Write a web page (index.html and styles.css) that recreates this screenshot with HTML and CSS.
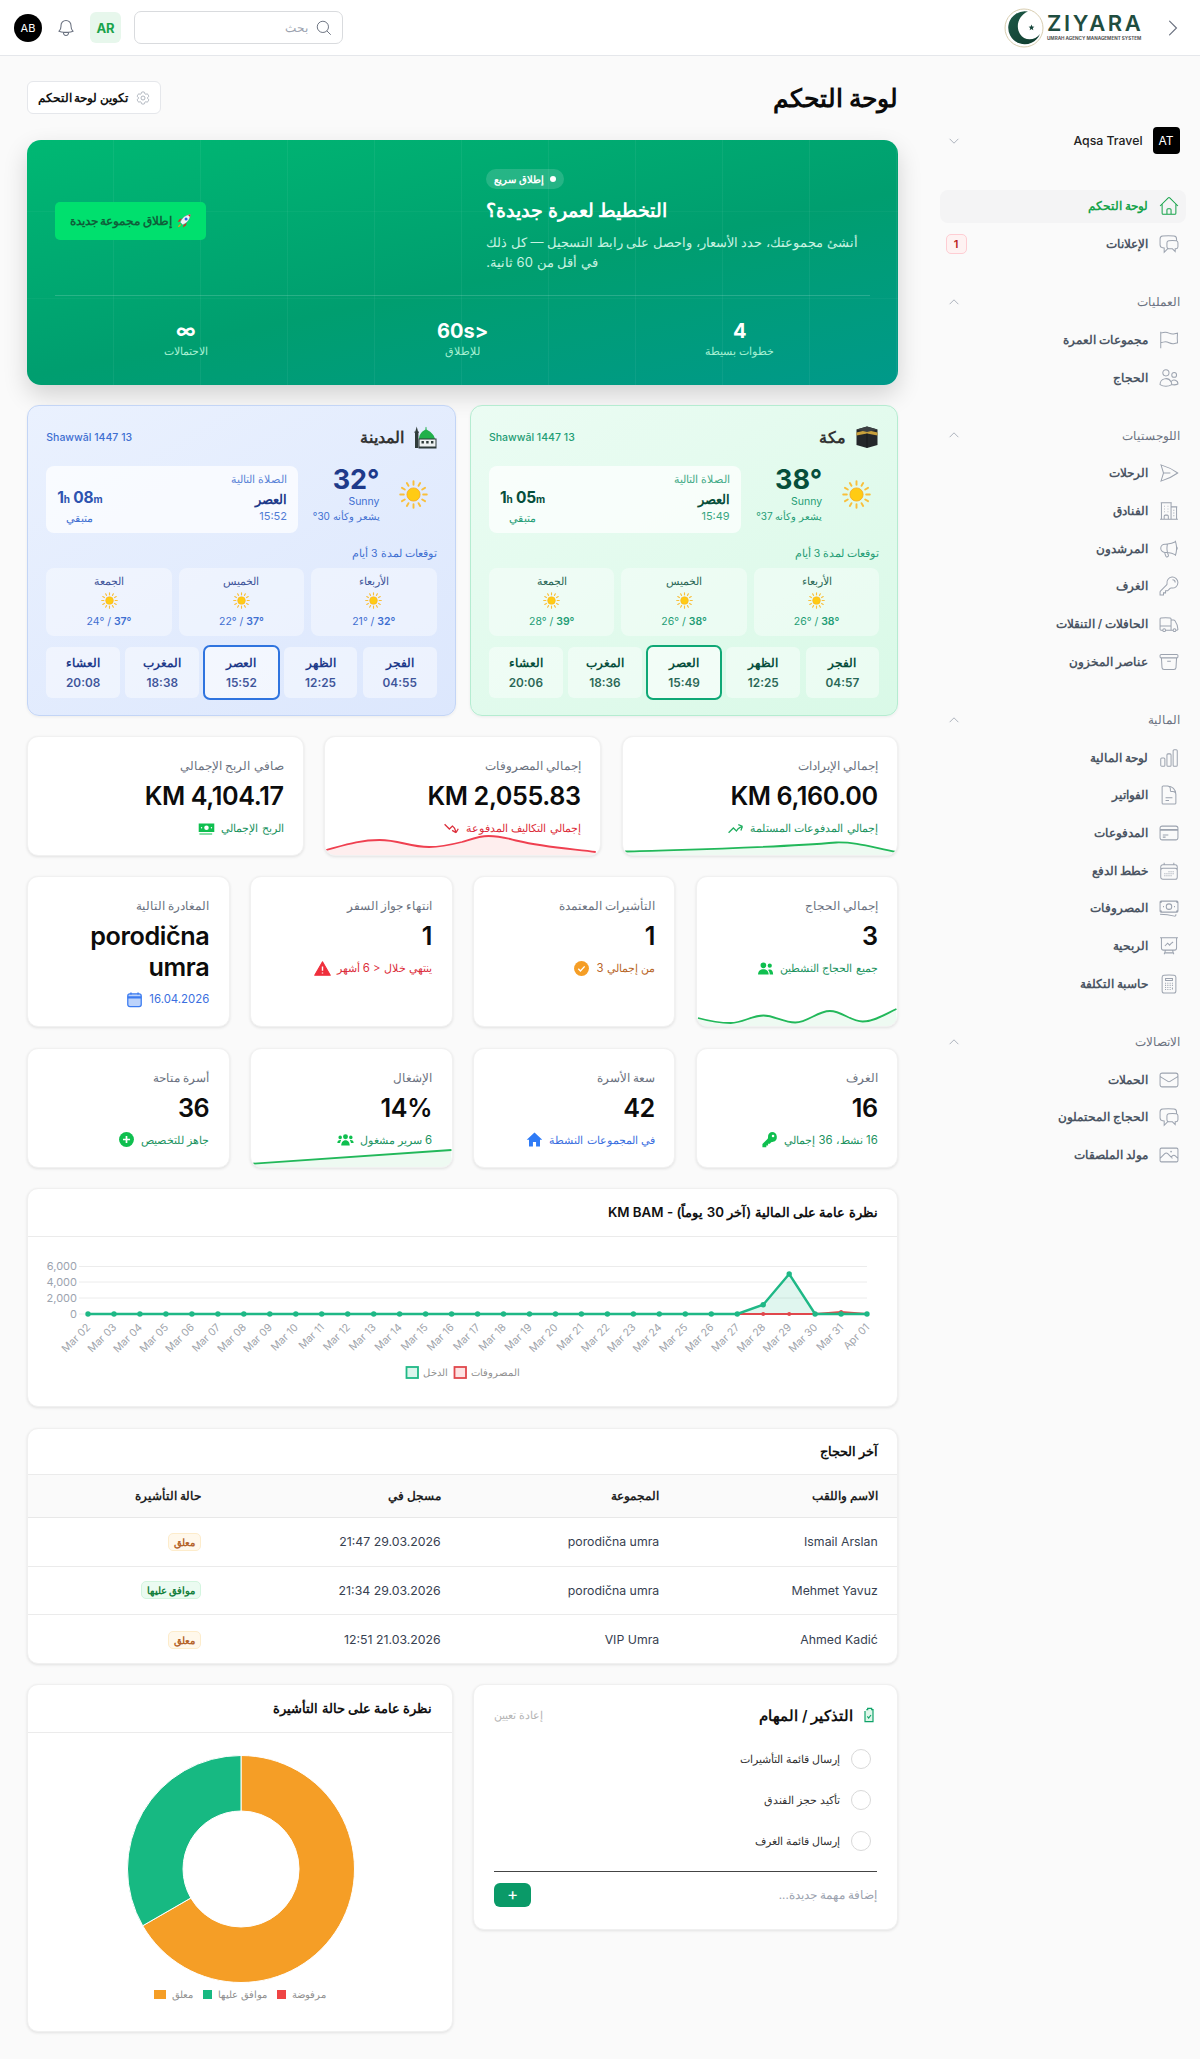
FILE: index.html
```html
<!DOCTYPE html>
<html lang="ar" dir="rtl">
<head>
<meta charset="utf-8">
<title>لوحة التحكم</title>
<link rel="stylesheet" href="styles.css">
</head>
<body>
<svg class="defs" aria-hidden="true">
<symbol id="i-home" viewBox="0 0 24 24"><path d="m2.25 12 8.954-8.955c.44-.439 1.152-.439 1.591 0L21.75 12M4.5 9.75v10.125c0 .621.504 1.125 1.125 1.125H9.75v-4.875c0-.621.504-1.125 1.125-1.125h2.25c.621 0 1.125.504 1.125 1.125V21h4.125c.621 0 1.125-.504 1.125-1.125V9.75M8.25 21h8.25"/></symbol>
<symbol id="i-chat" viewBox="0 0 24 24"><path d="M20.25 8.511c.884.284 1.5 1.128 1.5 2.097v4.286c0 1.136-.847 2.1-1.98 2.193-.34.027-.68.052-1.02.072v3.091l-3-3c-1.354 0-2.694-.055-4.02-.163a2.115 2.115 0 0 1-.825-.242m9.345-8.334a2.126 2.126 0 0 0-.476-.095 48.64 48.64 0 0 0-8.048 0c-1.131.094-1.976 1.057-1.976 2.192v4.286c0 .837.46 1.58 1.155 1.951m9.345-8.334V6.637c0-1.621-1.152-3.026-2.76-3.235A48.455 48.455 0 0 0 11.25 3c-2.115 0-4.198.137-6.24.402-1.608.209-2.76 1.614-2.76 3.235v6.226c0 1.621 1.152 3.026 2.76 3.235.577.075 1.157.14 1.74.194V21l4.155-4.155"/></symbol>
<symbol id="i-flag" viewBox="0 0 24 24"><path d="M3 3v1.5M3 21v-6m0 0 2.77-.693a9 9 0 0 1 6.208.682l.108.054a9 9 0 0 0 6.086.71l3.114-.732a48.524 48.524 0 0 1-.005-10.499l-3.11.732a9 9 0 0 1-6.085-.711l-.108-.054a9 9 0 0 0-6.208-.682L3 4.5M3 15V4.5"/></symbol>
<symbol id="i-users" viewBox="0 0 24 24"><path d="M15 19.128a9.38 9.38 0 0 0 2.625.372 9.337 9.337 0 0 0 4.121-.952 4.125 4.125 0 0 0-7.533-2.493M15 19.128v-.003c0-1.113-.285-2.16-.786-3.07M15 19.128v.106A12.318 12.318 0 0 1 8.624 21c-2.331 0-4.512-.645-6.374-1.766l-.001-.109a6.375 6.375 0 0 1 11.964-3.07M12 6.375a3.375 3.375 0 1 1-6.75 0 3.375 3.375 0 0 1 6.75 0Zm8.25 2.25a2.625 2.625 0 1 1-5.25 0 2.625 2.625 0 0 1 5.25 0Z"/></symbol>
<symbol id="i-plane" viewBox="0 0 24 24"><path d="M6 12 3.269 3.125A59.769 59.769 0 0 1 21.485 12 59.768 59.768 0 0 1 3.27 20.875L5.999 12Zm0 0h7.5"/></symbol>
<symbol id="i-building" viewBox="0 0 24 24"><path d="M2.25 21h19.5m-18-18v18m10.5-18v18m6-13.5V21M6.75 6.75h.75m-.75 3h.75m-.75 3h.75m3-6h.75m-.75 3h.75m-.75 3h.75M6.75 21v-3.375c0-.621.504-1.125 1.125-1.125h2.25c.621 0 1.125.504 1.125 1.125V21M3 3h12m-.75 4.5H21m-3.75 3.75h.008v.008h-.008v-.008Zm0 3h.008v.008h-.008v-.008Zm0 3h.008v.008h-.008v-.008Z"/></symbol>
<symbol id="i-mega" viewBox="0 0 24 24"><path d="M10.34 15.84c-.688-.06-1.386-.09-2.09-.09H7.5a4.5 4.5 0 1 1 0-9h.75c.704 0 1.402-.03 2.09-.09m0 9.18c.253.962.584 1.892.985 2.783.247.55.06 1.21-.463 1.511l-.657.38c-.551.318-1.26.117-1.527-.461a20.845 20.845 0 0 1-1.44-4.282m3.102.069a18.03 18.03 0 0 1-.59-4.59c0-1.586.205-3.124.59-4.59m0 9.18a23.848 23.848 0 0 1 8.835 2.535M10.34 6.66a23.847 23.847 0 0 0 8.835-2.535m0 0A23.74 23.74 0 0 0 18.795 3m.38 1.125a23.91 23.91 0 0 1 1.014 5.395m-1.014 8.855c-.118.38-.245.754-.38 1.125m.38-1.125a23.91 23.91 0 0 0 1.014-5.395m0-3.46c.495.413.811 1.035.811 1.73 0 .695-.316 1.317-.811 1.73m0-3.46a24.347 24.347 0 0 1 0 3.46"/></symbol>
<symbol id="i-key" viewBox="0 0 24 24"><path d="M15.75 5.25a3 3 0 0 1 3 3m3 0a6 6 0 0 1-7.029 5.912c-.563-.097-1.159.026-1.563.43L10.5 17.25H8.25v2.25H6v2.25H2.25v-2.818c0-.597.237-1.17.659-1.591l6.499-6.499c.404-.404.527-1 .43-1.563A6 6 0 1 1 21.75 8.25Z"/></symbol>
<symbol id="i-truck" viewBox="0 0 24 24"><path d="M8.25 18.75a1.5 1.5 0 0 1-3 0m3 0a1.5 1.5 0 0 0-3 0m3 0h6m-9 0H3.375a1.125 1.125 0 0 1-1.125-1.125V14.25m17.25 4.5a1.5 1.5 0 0 1-3 0m3 0a1.5 1.5 0 0 0-3 0m3 0h1.125c.621 0 1.129-.504 1.09-1.124a17.902 17.902 0 0 0-3.213-9.193 2.056 2.056 0 0 0-1.58-.86H14.25M16.5 18.75h-2.25m0-11.177v-.958c0-.568-.422-1.048-.987-1.106a48.554 48.554 0 0 0-10.026 0 1.106 1.106 0 0 0-.987 1.106v7.635m12-6.677v6.677m0 4.5v-4.5m0 0h-12"/></symbol>
<symbol id="i-box" viewBox="0 0 24 24"><path d="m20.25 7.5-.625 10.632a2.25 2.25 0 0 1-2.247 2.118H6.622a2.25 2.25 0 0 1-2.247-2.118L3.75 7.5M10 11.25h4M3.375 7.5h17.25c.621 0 1.125-.504 1.125-1.125v-1.5c0-.621-.504-1.125-1.125-1.125H3.375c-.621 0-1.125.504-1.125 1.125v1.5c0 .621.504 1.125 1.125 1.125Z"/></symbol>
<symbol id="i-bars" viewBox="0 0 24 24"><path d="M3 13.125C3 12.504 3.504 12 4.125 12h2.25c.621 0 1.125.504 1.125 1.125v6.75C7.5 20.496 6.996 21 6.375 21h-2.25A1.125 1.125 0 0 1 3 19.875v-6.75ZM9.75 8.625c0-.621.504-1.125 1.125-1.125h2.25c.621 0 1.125.504 1.125 1.125v11.25c0 .621-.504 1.125-1.125 1.125h-2.25a1.125 1.125 0 0 1-1.125-1.125V8.625ZM16.5 4.125c0-.621.504-1.125 1.125-1.125h2.25C20.496 3 21 3.504 21 4.125v15.75c0 .621-.504 1.125-1.125 1.125h-2.25a1.125 1.125 0 0 1-1.125-1.125V4.125Z"/></symbol>
<symbol id="i-doc" viewBox="0 0 24 24"><path d="M19.5 14.25v-2.625a3.375 3.375 0 0 0-3.375-3.375h-1.5A1.125 1.125 0 0 1 13.5 7.125v-1.5a3.375 3.375 0 0 0-3.375-3.375H8.25m0 12.75h7.5m-7.5 3H12M10.5 2.25H5.625c-.621 0-1.125.504-1.125 1.125v17.25c0 .621.504 1.125 1.125 1.125h12.75c.621 0 1.125-.504 1.125-1.125V11.25a9 9 0 0 0-9-9Z"/></symbol>
<symbol id="i-card" viewBox="0 0 24 24"><path d="M2.25 8.25h19.5M2.25 9h19.5m-16.5 5.25h6m-6 2.25h3m-3.75 3h15a2.25 2.25 0 0 0 2.25-2.25V6.75A2.25 2.25 0 0 0 19.5 4.5h-15a2.25 2.25 0 0 0-2.25 2.25v10.5A2.25 2.25 0 0 0 4.5 19.5Z"/></symbol>
<symbol id="i-cal" viewBox="0 0 24 24"><path d="M6.75 3v2.25M17.25 3v2.25M3 18.75V7.5a2.25 2.25 0 0 1 2.25-2.25h13.5A2.25 2.25 0 0 1 21 7.5v11.25m-18 0A2.25 2.25 0 0 0 5.25 21h13.5A2.25 2.25 0 0 0 21 18.75m-18 0v-7.5A2.25 2.25 0 0 1 5.25 9h13.5A2.25 2.25 0 0 1 21 11.25v7.5m-9-6h.008v.008H12v-.008ZM12 15h.008v.008H12V15Zm0 2.25h.008v.008H12v-.008ZM9.75 15h.008v.008H9.75V15Zm0 2.25h.008v.008H9.75v-.008ZM7.5 15h.008v.008H7.5V15Zm0 2.25h.008v.008H7.5v-.008Zm6.75-4.5h.008v.008h-.008v-.008Zm0 2.25h.008v.008h-.008V15Zm0 2.25h.008v.008h-.008v-.008Zm2.25-4.5h.008v.008H16.5v-.008Zm0 2.25h.008v.008H16.5V15Z"/></symbol>
<symbol id="i-notes" viewBox="0 0 24 24"><path d="M2.25 18.75a60.07 60.07 0 0 1 15.797 2.101c.727.198 1.453-.342 1.453-1.096V18.75M3.75 4.5v.75A.75.75 0 0 1 3 6h-.75m0 0v-.375c0-.621.504-1.125 1.125-1.125H20.25M2.25 6v9m18-10.5v.75c0 .414.336.75.75.75h.75m-1.5-1.5h.375c.621 0 1.125.504 1.125 1.125v9.75c0 .621-.504 1.125-1.125 1.125h-.375m1.5-1.5H21a.75.75 0 0 0-.75.75v.75m0 0H3.75m0 0h-.375a1.125 1.125 0 0 1-1.125-1.125V15m1.5 1.5v-.75A.75.75 0 0 0 3 15h-.75M15 10.5a3 3 0 1 1-6 0 3 3 0 0 1 6 0Zm3 0h.008v.008H18V10.5Zm-12 0h.008v.008H6V10.5Z"/></symbol>
<symbol id="i-present" viewBox="0 0 24 24"><path d="M3.75 3v11.25A2.25 2.25 0 0 0 6 16.5h2.25M3.75 3h-1.5m1.5 0h16.5m0 0h1.5m-1.5 0v11.25A2.25 2.25 0 0 1 18 16.5h-2.25m-7.5 0h7.5m-7.5 0-1 3m8.5-3 1 3m0 0 .5 1.5m-.5-1.5h-9.5m0 0-.5 1.5m.75-9 3-3 2.148 2.148A12.061 12.061 0 0 1 16.5 7.605"/></symbol>
<symbol id="i-calc" viewBox="0 0 24 24"><path d="M15.75 15.75V18m-7.5-6.75h.008v.008H8.25v-.008Zm0 2.25h.008v.008H8.25V13.5Zm0 2.25h.008v.008H8.25v-.008Zm0 2.25h.008v.008H8.25V18Zm2.498-6.75h.007v.008h-.007v-.008Zm0 2.25h.007v.008h-.007V13.5Zm0 2.25h.007v.008h-.007v-.008Zm0 2.25h.007v.008h-.007V18Zm2.504-6.75h.008v.008h-.008v-.008Zm0 2.25h.008v.008h-.008V13.5Zm0 2.25h.008v.008h-.008v-.008Zm0 2.25h.008v.008h-.008V18Zm2.498-6.75h.008v.008h-.008v-.008Zm0 2.25h.008v.008h-.008V13.5ZM8.25 6h7.5v2.25h-7.5V6ZM12 2.25c-1.892 0-3.758.11-5.593.322C5.307 2.7 4.5 3.65 4.5 4.757V19.5a2.25 2.25 0 0 0 2.25 2.25h10.5a2.25 2.25 0 0 0 2.25-2.25V4.757c0-1.108-.806-2.057-1.907-2.185A48.507 48.507 0 0 0 12 2.25Z"/></symbol>
<symbol id="i-mail" viewBox="0 0 24 24"><path d="M21.75 6.75v10.5a2.25 2.25 0 0 1-2.25 2.25h-15a2.25 2.25 0 0 1-2.25-2.25V6.75m19.5 0A2.25 2.25 0 0 0 19.5 4.5h-15a2.25 2.25 0 0 0-2.25 2.25m19.5 0v.243a2.25 2.25 0 0 1-1.07 1.916l-7.5 4.615a2.25 2.25 0 0 1-2.36 0L3.32 8.91a2.25 2.25 0 0 1-1.07-1.916V6.75"/></symbol>
<symbol id="i-photo" viewBox="0 0 24 24"><path d="m2.25 15.75 5.159-5.159a2.25 2.25 0 0 1 3.182 0l5.159 5.159m-1.5-1.5 1.409-1.409a2.25 2.25 0 0 1 3.182 0l2.909 2.909m-18 3.75h16.5a1.5 1.5 0 0 0 1.5-1.5V6a1.5 1.5 0 0 0-1.5-1.5H3.75A1.5 1.5 0 0 0 2.25 6v12a1.5 1.5 0 0 0 1.5 1.5Zm10.5-11.25h.008v.008h-.008V8.25Zm.375 0a.375.375 0 1 1-.75 0 .375.375 0 0 1 .75 0Z"/></symbol>
<symbol id="i-bell" viewBox="0 0 24 24"><path d="M14.857 17.082a23.848 23.848 0 0 0 5.454-1.31A8.967 8.967 0 0 1 18 9.75V9A6 6 0 0 0 6 9v.75a8.967 8.967 0 0 1-2.312 6.022c1.733.64 3.56 1.085 5.455 1.31m5.714 0a24.255 24.255 0 0 1-5.714 0m5.714 0a3 3 0 1 1-5.714 0"/></symbol>
<symbol id="i-search" viewBox="0 0 24 24"><path d="m21 21-5.197-5.197m0 0A7.5 7.5 0 1 0 5.196 5.196a7.5 7.5 0 0 0 10.607 10.607Z"/></symbol>
<symbol id="i-cog" viewBox="0 0 24 24"><path d="M9.594 3.94c.09-.542.56-.94 1.11-.94h2.593c.55 0 1.02.398 1.11.94l.213 1.281c.063.374.313.686.645.87.074.04.147.083.22.127.325.196.72.257 1.075.124l1.217-.456a1.125 1.125 0 0 1 1.37.49l1.296 2.247a1.125 1.125 0 0 1-.26 1.431l-1.003.827c-.293.241-.438.613-.43.992a7.723 7.723 0 0 1 0 .255c-.008.378.137.75.43.991l1.004.827c.424.35.534.955.26 1.43l-1.298 2.247a1.125 1.125 0 0 1-1.369.491l-1.217-.456c-.355-.133-.75-.072-1.076.124a6.47 6.47 0 0 1-.22.128c-.331.183-.581.495-.644.869l-.213 1.281c-.09.543-.56.94-1.11.94h-2.594c-.55 0-1.019-.398-1.11-.94l-.213-1.281c-.062-.374-.312-.686-.644-.87a6.52 6.52 0 0 1-.22-.127c-.325-.196-.72-.257-1.076-.124l-1.217.456a1.125 1.125 0 0 1-1.369-.49l-1.297-2.247a1.125 1.125 0 0 1 .26-1.431l1.004-.827c.292-.24.437-.613.43-.991a6.932 6.932 0 0 1 0-.255c.007-.38-.138-.751-.43-.992l-1.004-.827a1.125 1.125 0 0 1-.26-1.43l1.297-2.247a1.125 1.125 0 0 1 1.37-.491l1.216.456c.356.133.751.072 1.076-.124.072-.044.146-.086.22-.128.332-.183.582-.495.644-.869l.214-1.28Z"/><path d="M15 12a3 3 0 1 1-6 0 3 3 0 0 1 6 0Z"/></symbol>
<symbol id="i-down" viewBox="0 0 24 24"><path d="m19.5 8.25-7.5 7.5-7.5-7.5"/></symbol>
<symbol id="i-up" viewBox="0 0 24 24"><path d="m4.5 15.75 7.5-7.5 7.5 7.5"/></symbol>
<symbol id="i-right" viewBox="0 0 24 24"><path d="m8.25 4.5 7.5 7.5-7.5 7.5"/></symbol>
<symbol id="i-sun" viewBox="0 0 36 36"><circle cx="18" cy="18" r="8.200" class="sun-core"/><path class="sun-rays" d="M18 1.500v4.500M18 30v4.500M1.500 18H6M30 18h4.500M9.750 3.700l2 3.500M24.250 28.800l2 3.500M26.250 3.700l-2 3.500M11.750 28.800l-2 3.500M3.700 9.750l3.500 2M28.800 24.250l3.500 2M3.700 26.250l3.500-2M28.800 11.750l3.500-2"/></symbol>
<symbol id="i-rocket" viewBox="0 0 20 20"><path d="M6 14c-2 .3-3.200 1.600-3.600 3.800C4.600 17.400 5.900 16.200 6.200 14.200Z" fill="#f59e0b"/><path d="M4.600 10.600 2 11.400l2.600-4 3.200-.6ZM9.400 15.400 8.600 18l4-2.600.6-3.200Z" fill="#dc2626"/><path d="M5.400 11.600C7.400 6 11.600 2.600 18 2c-.6 6.400-4 10.600-9.600 12.600Z" fill="#f3f4f6" stroke="#64748b" stroke-width=".5"/><circle cx="12.600" cy="7.400" r="1.900" fill="#2563eb"/><path d="M15 2.500 18 2l-.5 3Z" fill="#dc2626"/></symbol>
<symbol id="i-mosque" viewBox="0 0 24 24"><rect x="2" y="8" width="3.400" height="15" fill="#2f3b3a"/><path d="M3.700 1.500 5 6.500v2H2.400v-2Z" fill="#2f3b3a"/><rect x="1.500" y="6.500" width="4.400" height="1.400" fill="#2f3b3a"/><path d="M6 14c0-5 3.500-8 6.500-9.500V2.500l.5-.8.5.8v2C16.500 6 21 9 22 14Z" fill="#21b04b"/><rect x="6" y="14" width="17" height="9" fill="#eef2f2" stroke="#2f3b3a" stroke-width="1"/><rect x="8.500" y="16" width="2.400" height="2.500" fill="#2f3b3a"/><rect x="13.200" y="16" width="2.400" height="2.500" fill="#2f3b3a"/><rect x="18" y="16" width="2.400" height="2.500" fill="#2f3b3a"/><rect x="6" y="21.500" width="17" height="1.500" fill="#2f3b3a"/></symbol>
<symbol id="i-kaaba" viewBox="0 0 24 24"><path d="M12 1.500 22.500 4.500V20L12 23 1.500 20V4.500Z" fill="#24272a"/><path d="M1.500 7.500 12 5 22.500 7.500v3L12 8.500 1.500 10.500Z" fill="#c8a03c"/><path d="M1.500 4.500 12 1.500 22.500 4.500 12 7 1.500 4.500Z" fill="#3c4043"/><path d="M12 8.500V23" stroke="#101214" stroke-width=".6"/></symbol>
</svg>

<header class="topbar">
  <div class="brand">
    <svg class="brand-toggle"><use href="#i-right"/></svg>
    <div class="brand-word">
      <span class="brand-name">ZIYARA</span>
      <span class="brand-sub">UMRAH AGENCY MANAGEMENT SYSTEM</span>
    </div>
    <svg class="brand-mark" viewBox="0 0 40 40">
      <defs><linearGradient id="moon" x1="0" y1="0" x2="1" y2="1"><stop offset="0" stop-color="#1d5a48"/><stop offset="1" stop-color="#0f3a2d"/></linearGradient></defs>
      <circle cx="20" cy="20" r="19" fill="#fff" stroke="#d8cdb0" stroke-width="1"/>
      <path d="M24 3.500A16.500 16.500 0 1 0 36 26C31 33 20 33 16 26 11 18 15 7 24 3.500Z" fill="url(#moon)"/>
      <path d="M27.500 16.500l.8 2 2.100.2-1.600 1.400.5 2.100-1.800-1.100-1.800 1.100.5-2.100-1.600-1.400 2.100-.2Z" fill="#16453a"/>
    </svg>
  </div>
  <div class="tools">
    <div class="search"><svg class="search-icon"><use href="#i-search"/></svg><span>بحث</span></div>
    <div class="lang">AR</div>
    <svg class="bell"><use href="#i-bell"/></svg>
    <div class="avatar">AB</div>
  </div>
</header>

<div class="layout">
<aside class="sidebar">
  <div class="org">
    <div class="org-logo">AT</div>
    <div class="org-name">Aqsa Travel</div>
    <svg class="chev"><use href="#i-down"/></svg>
  </div>
  <nav class="nav-group first">
    <a class="nav-item active"><svg class="nav-icon"><use href="#i-home"/></svg><span>لوحة التحكم</span></a>
    <a class="nav-item"><svg class="nav-icon"><use href="#i-chat"/></svg><span>الإعلانات</span><b class="count">1</b></a>
  </nav>
  <nav class="nav-group">
    <div class="nav-head"><span>العمليات</span><svg class="chev"><use href="#i-up"/></svg></div>
    <a class="nav-item"><svg class="nav-icon"><use href="#i-flag"/></svg><span>مجموعات العمرة</span></a>
    <a class="nav-item"><svg class="nav-icon"><use href="#i-users"/></svg><span>الحجاج</span></a>
  </nav>
  <nav class="nav-group">
    <div class="nav-head"><span>اللوجستيات</span><svg class="chev"><use href="#i-up"/></svg></div>
    <a class="nav-item"><svg class="nav-icon"><use href="#i-plane"/></svg><span>الرحلات</span></a>
    <a class="nav-item"><svg class="nav-icon"><use href="#i-building"/></svg><span>الفنادق</span></a>
    <a class="nav-item"><svg class="nav-icon"><use href="#i-mega"/></svg><span>المرشدون</span></a>
    <a class="nav-item"><svg class="nav-icon"><use href="#i-key"/></svg><span>الغرف</span></a>
    <a class="nav-item"><svg class="nav-icon"><use href="#i-truck"/></svg><span>الحافلات / التنقلات</span></a>
    <a class="nav-item"><svg class="nav-icon"><use href="#i-box"/></svg><span>عناصر المخزون</span></a>
  </nav>
  <nav class="nav-group">
    <div class="nav-head"><span>المالية</span><svg class="chev"><use href="#i-up"/></svg></div>
    <a class="nav-item"><svg class="nav-icon"><use href="#i-bars"/></svg><span>لوحة المالية</span></a>
    <a class="nav-item"><svg class="nav-icon"><use href="#i-doc"/></svg><span>الفواتير</span></a>
    <a class="nav-item"><svg class="nav-icon"><use href="#i-card"/></svg><span>المدفوعات</span></a>
    <a class="nav-item"><svg class="nav-icon"><use href="#i-cal"/></svg><span>خطط الدفع</span></a>
    <a class="nav-item"><svg class="nav-icon"><use href="#i-notes"/></svg><span>المصروفات</span></a>
    <a class="nav-item"><svg class="nav-icon"><use href="#i-present"/></svg><span>الربحية</span></a>
    <a class="nav-item"><svg class="nav-icon"><use href="#i-calc"/></svg><span>حاسبة التكلفة</span></a>
  </nav>
  <nav class="nav-group">
    <div class="nav-head"><span>الاتصالات</span><svg class="chev"><use href="#i-up"/></svg></div>
    <a class="nav-item"><svg class="nav-icon"><use href="#i-mail"/></svg><span>الحملات</span></a>
    <a class="nav-item"><svg class="nav-icon"><use href="#i-chat"/></svg><span>الحجاج المحتملون</span></a>
    <a class="nav-item"><svg class="nav-icon"><use href="#i-photo"/></svg><span>مولد الملصقات</span></a>
  </nav>
</aside>

<main class="main">
  <div class="page-head">
    <h1>لوحة التحكم</h1>
    <button class="config"><svg class="config-icon"><use href="#i-cog"/></svg><span>تكوين لوحة التحكم</span></button>
  </div>

  <section class="hero">
    <div class="hero-top">
      <div class="hero-text">
        <div class="hero-badge"><span class="dot"></span>إطلاق سريع</div>
        <h2>التخطيط لعمرة جديدة؟</h2>
        <p>أنشئ مجموعتك، حدد الأسعار، واحصل على رابط التسجيل — كل ذلك في أقل من 60 ثانية.</p>
      </div>
      <button class="hero-btn"><svg class="rocket"><use href="#i-rocket"/></svg><span>إطلاق مجموعة جديدة</span></button>
    </div>
    <div class="hero-stats">
      <div class="hero-stat"><strong>4</strong><span>خطوات بسيطة</span></div>
      <div class="hero-stat"><strong>&lt;60s</strong><span>للإطلاق</span></div>
      <div class="hero-stat"><strong>∞</strong><span>الاحتمالات</span></div>
    </div>
  </section>

  <section class="weather-grid">
    <article class="weather green">
      <div class="w-head">
        <svg class="w-city"><use href="#i-kaaba"/></svg><h3>مكة</h3>
        <span class="w-date">13 Shawwāl 1447</span>
      </div>
      <div class="w-main">
        <svg class="w-sun"><use href="#i-sun"/></svg>
        <div class="w-temp"><strong dir="ltr">38°</strong><span>Sunny</span><span class="w-feels">يشعر وكأنه 37°</span></div>
        <div class="w-next">
          <div class="w-next-a"><small>الصلاة التالية</small><b>العصر</b><span>15:49</span></div>
          <div class="w-next-b"><strong>1<i>h</i> 05<i>m</i></strong><span>متبقي</span></div>
        </div>
      </div>
      <div class="w-label">توقعات لمدة 3 أيام</div>
      <div class="w-days">
        <div class="w-day"><span>الأربعاء</span><svg class="w-sun-s"><use href="#i-sun"/></svg><em dir="ltr">26° / <b>38°</b></em></div>
        <div class="w-day"><span>الخميس</span><svg class="w-sun-s"><use href="#i-sun"/></svg><em dir="ltr">26° / <b>38°</b></em></div>
        <div class="w-day"><span>الجمعة</span><svg class="w-sun-s"><use href="#i-sun"/></svg><em dir="ltr">28° / <b>39°</b></em></div>
      </div>
      <div class="w-prayers">
        <div class="w-prayer"><span>الفجر</span><b>04:57</b></div>
        <div class="w-prayer"><span>الظهر</span><b>12:25</b></div>
        <div class="w-prayer now"><span>العصر</span><b>15:49</b></div>
        <div class="w-prayer"><span>المغرب</span><b>18:36</b></div>
        <div class="w-prayer"><span>العشاء</span><b>20:06</b></div>
      </div>
    </article>
    <article class="weather blue">
      <div class="w-head">
        <svg class="w-city"><use href="#i-mosque"/></svg><h3>المدينة</h3>
        <span class="w-date">13 Shawwāl 1447</span>
      </div>
      <div class="w-main">
        <svg class="w-sun"><use href="#i-sun"/></svg>
        <div class="w-temp"><strong dir="ltr">32°</strong><span>Sunny</span><span class="w-feels">يشعر وكأنه 30°</span></div>
        <div class="w-next">
          <div class="w-next-a"><small>الصلاة التالية</small><b>العصر</b><span>15:52</span></div>
          <div class="w-next-b"><strong>1<i>h</i> 08<i>m</i></strong><span>متبقي</span></div>
        </div>
      </div>
      <div class="w-label">توقعات لمدة 3 أيام</div>
      <div class="w-days">
        <div class="w-day"><span>الأربعاء</span><svg class="w-sun-s"><use href="#i-sun"/></svg><em dir="ltr">21° / <b>32°</b></em></div>
        <div class="w-day"><span>الخميس</span><svg class="w-sun-s"><use href="#i-sun"/></svg><em dir="ltr">22° / <b>37°</b></em></div>
        <div class="w-day"><span>الجمعة</span><svg class="w-sun-s"><use href="#i-sun"/></svg><em dir="ltr">24° / <b>37°</b></em></div>
      </div>
      <div class="w-prayers">
        <div class="w-prayer"><span>الفجر</span><b>04:55</b></div>
        <div class="w-prayer"><span>الظهر</span><b>12:25</b></div>
        <div class="w-prayer now"><span>العصر</span><b>15:52</b></div>
        <div class="w-prayer"><span>المغرب</span><b>18:38</b></div>
        <div class="w-prayer"><span>العشاء</span><b>20:08</b></div>
      </div>
    </article>
  </section>

  <section class="stats three">
    <article class="stat h120">
      <div class="s-label">إجمالي الإيرادات</div><div class="s-value">KM 6,160.00</div>
      <div class="s-sub c-green"><span>إجمالي المدفوعات المستلمة</span><svg class="s-icon line" viewBox="0 0 24 24"><path d="M2.250 18 9 11.250l4.306 4.307a11.950 11.950 0 0 1 5.814-5.519l2.740-1.220m0 0-5.940-2.280m5.940 2.280-2.280 5.941"/></svg></div>
      <svg class="spark" viewBox="0 0 277 40" preserveAspectRatio="none"><path class="area-g" d="M2 36.500C80 34 150 33 215 27.500 235 27 250 32 276 37V40H2Z"/><path class="ln-g" d="M2 36.500C80 34 150 33 215 27.500 235 27 250 32 276 37"/></svg>
    </article>
    <article class="stat h120">
      <div class="s-label">إجمالي المصروفات</div><div class="s-value">KM 2,055.83</div>
      <div class="s-sub c-red"><span>إجمالي التكاليف المدفوعة</span><svg class="s-icon line" viewBox="0 0 24 24"><path d="M2.250 6 9 12.750l4.286-4.286a11.948 11.948 0 0 1 4.306 6.430l.776 2.898m0 0 3.182-5.511m-3.182 5.510-5.511-3.181"/></svg></div>
      <svg class="spark" viewBox="0 0 277 40" preserveAspectRatio="none"><path class="area-r" d="M1 35C20 30 35 25 55 25 75 25 85 32 105 32 118 32 130 29 138 27 148 24 155 21 165 21 178 21 186 24 195 26 220 32 250 34 273 37V40H1Z"/><path class="ln-r" d="M1 35C20 30 35 25 55 25 75 25 85 32 105 32 118 32 130 29 138 27 148 24 155 21 165 21 178 21 186 24 195 26 220 32 250 34 273 37"/></svg>
    </article>
    <article class="stat h120">
      <div class="s-label">صافي الربح الإجمالي</div><div class="s-value">KM 4,104.17</div>
      <div class="s-sub c-green"><span>الربح الإجمالي</span><svg class="s-icon" viewBox="0 0 24 24"><path class="solid-g" d="M1 5h22v12H1Z"/><circle cx="12" cy="11" r="3.200" fill="#fff"/><circle cx="5" cy="11" r="1" fill="#fff"/><circle cx="19" cy="11" r="1" fill="#fff"/><path class="solid-g" d="M2 19h18v1.500H2Z"/></svg></div>
    </article>
  </section>

  <section class="stats four">
    <article class="stat h151">
      <div class="s-label">إجمالي الحجاج</div><div class="s-value">3</div>
      <div class="s-sub c-green"><span>جميع الحجاج النشطين</span><svg class="s-icon" viewBox="0 0 24 24"><path class="solid-g" d="M9 3.500a4 4 0 1 1 0 8 4 4 0 0 1 0-8Zm9 1.500a3 3 0 1 1 0 6 3 3 0 0 1 0-6ZM1.500 20.500c0-5 3.400-7.500 7.500-7.500s7.500 2.500 7.500 7.500ZM18 20.500c0-2.800-.8-5-2.300-6.500.7-.3 1.500-.5 2.300-.5 2.900 0 4.800 2.700 4.800 7Z"/></svg></div>
      <svg class="spark" viewBox="0 0 202 40" preserveAspectRatio="none"><path class="area-g" d="M1 32C12 35 23 37 34 37 46 37 55 29.500 67 29.500 78 29.500 87 36.500 99 36.500 112 36.500 121 25 134 25 146 25 155 35.500 167 35.500 179 35.500 190 28 201 23V40H1Z"/><path class="ln-g" d="M1 32C12 35 23 37 34 37 46 37 55 29.500 67 29.500 78 29.500 87 36.500 99 36.500 112 36.500 121 25 134 25 146 25 155 35.500 167 35.500 179 35.500 190 28 201 23"/></svg>
    </article>
    <article class="stat h151">
      <div class="s-label">التأشيرات المعتمدة</div><div class="s-value">1</div>
      <div class="s-sub c-amber"><span>من إجمالي 3</span><svg class="s-icon" viewBox="0 0 24 24"><circle cx="12" cy="12" r="10.500" fill="#f59e26"/><path d="M7.500 12.500l3 3 6-6.500" fill="none" stroke="#fff" stroke-width="2"/></svg></div>
    </article>
    <article class="stat h151">
      <div class="s-label">انتهاء جواز السفر</div><div class="s-value">1</div>
      <div class="s-sub c-red"><span>ينتهي خلال &lt; 6 أشهر</span><svg class="s-icon" viewBox="0 0 24 24"><path d="M12 2.500 23 21.500H1Z" fill="#ef2f3c" stroke="#ef2f3c" stroke-width="1.500" stroke-linejoin="round"/><path d="M12 9v6M12 17.500v1.500" stroke="#fff" stroke-width="2"/></svg></div>
    </article>
    <article class="stat h151">
      <div class="s-label">المغادرة التالية</div><div class="s-value wrap">porodična umra</div>
      <div class="s-sub c-blue"><span>16.04.2026</span><svg class="s-icon" viewBox="0 0 24 24"><rect x="2.500" y="4" width="19" height="18" rx="3" fill="#bcd3fb" stroke="#3b7bf0" stroke-width="1.800"/><path d="M2.500 9h19" stroke="#3b7bf0" stroke-width="3"/><path d="M7 2v3M17 2v3" stroke="#3b7bf0" stroke-width="2"/></svg></div>
    </article>
  </section>

  <section class="stats four">
    <article class="stat h120">
      <div class="s-label">الغرف</div><div class="s-value">16</div>
      <div class="s-sub c-green"><span>16 نشط، 36 إجمالي</span><svg class="s-icon" viewBox="0 0 24 24"><path class="solid-g" d="M15.500 1.500a7 7 0 0 1 1.500 13.800c-1.300.3-2.200.3-3 1.100l-1.500 1.600H10v2.500H7.500V23H2v-4.500l7.500-7.500c.5-.9.400-1.800.4-2.500A7 7 0 0 1 15.500 1.500Z"/><circle cx="17" cy="7" r="1.800" fill="#fff"/></svg></div>
    </article>
    <article class="stat h120">
      <div class="s-label">سعة الأسرة</div><div class="s-value">42</div>
      <div class="s-sub c-blue"><span>في المجموعات النشطة</span><svg class="s-icon" viewBox="0 0 24 24"><path d="M12 2 1 12.500h3.200V22h5.600v-6.500h4.400V22h5.600v-9.500H23Z" fill="#2f7bf6"/></svg></div>
    </article>
    <article class="stat h120">
      <div class="s-label">الإشغال</div><div class="s-value">14%</div>
      <div class="s-sub c-green"><span>6 سرير مشغول</span><svg class="s-icon" viewBox="0 0 24 24"><path class="solid-g" d="M12 4.500a3.500 3.500 0 1 1 0 7 3.500 3.500 0 0 1 0-7ZM4.500 6.500a2.500 2.500 0 1 1 0 5 2.500 2.500 0 0 1 0-5Zm15 0a2.500 2.500 0 1 1 0 5 2.500 2.500 0 0 1 0-5ZM6 20.500c0-4.500 2.500-7.500 6-7.500s6 3 6 7.500ZM.5 17c0-2.500 1.500-4.200 4-4.200.5 0 1 .1 1.400.2C5 14.200 4.500 15.500 4.300 17Zm23 0c0-2.500-1.500-4.200-4-4.200-.5 0-1 .1-1.400.2.900 1.200 1.400 2.500 1.600 4Z"/></svg></div>
      <svg class="spark" viewBox="0 0 202 40" preserveAspectRatio="none"><path class="area-g" d="M2 36.700 202 23V40H2Z"/><path class="ln-g" d="M2 36.700 202 23"/></svg>
    </article>
    <article class="stat h120">
      <div class="s-label">أسرة متاحة</div><div class="s-value">36</div>
      <div class="s-sub c-green"><span>جاهز للتخصيص</span><svg class="s-icon" viewBox="0 0 24 24"><circle cx="12" cy="12" r="10.500" fill="#0fbf4f"/><path d="M12 7v10M7 12h10" stroke="#fff" stroke-width="2.400"/></svg></div>
    </article>
  </section>

  <section class="card chart-card">
    <h4 class="card-title t-chart">نظرة عامة على المالية (آخر 30 يوماً) - KM BAM</h4>
    <svg class="fin-chart" viewBox="0 0 871 170">
      <g class="grid"><path d="M52 29.500H840M52 45H840M52 61H840M52 77H840"/></g>
      <g class="y-ticks"><text x="50" y="33">6,000</text><text x="50" y="49">4,000</text><text x="50" y="65">2,000</text><text x="50" y="81">0</text></g>
      <path class="fin-area-g" d="M710.300 77 736.200 67.700 762.200 37 788.100 77Z"/>
      <path class="fin-area-r" d="M788.100 77 814.100 75 840 77Z"/>
      <path class="fin-line-r" d="M710.300 77H788.100L814.100 75 840 77"/>
      <path class="fin-line-g" d="M61 77H710.300L736.200 67.700 762.200 37 788.100 77H840"/>
      <g class="dots-r"><circle cx="736.200" cy="77" r="2"/><circle cx="762.200" cy="77" r="2"/><circle cx="814.100" cy="75" r="2"/></g>
      <g class="dots-g"><circle cx="61" cy="77" r="2.700"/><circle cx="87" cy="77" r="2.700"/><circle cx="112.900" cy="77" r="2.700"/><circle cx="138.900" cy="77" r="2.700"/><circle cx="164.900" cy="77" r="2.700"/><circle cx="190.900" cy="77" r="2.700"/><circle cx="216.800" cy="77" r="2.700"/><circle cx="242.800" cy="77" r="2.700"/><circle cx="268.800" cy="77" r="2.700"/><circle cx="294.700" cy="77" r="2.700"/><circle cx="320.700" cy="77" r="2.700"/><circle cx="346.700" cy="77" r="2.700"/><circle cx="372.600" cy="77" r="2.700"/><circle cx="398.600" cy="77" r="2.700"/><circle cx="424.600" cy="77" r="2.700"/><circle cx="450.600" cy="77" r="2.700"/><circle cx="476.500" cy="77" r="2.700"/><circle cx="502.500" cy="77" r="2.700"/><circle cx="528.500" cy="77" r="2.700"/><circle cx="554.400" cy="77" r="2.700"/><circle cx="580.400" cy="77" r="2.700"/><circle cx="606.400" cy="77" r="2.700"/><circle cx="632.300" cy="77" r="2.700"/><circle cx="658.300" cy="77" r="2.700"/><circle cx="684.300" cy="77" r="2.700"/><circle cx="710.300" cy="77" r="2.700"/><circle cx="736.200" cy="67.700" r="2.700"/><circle cx="762.200" cy="37" r="2.700"/><circle cx="788.100" cy="77" r="2.700"/><circle cx="814.100" cy="77" r="2.700"/><circle cx="840" cy="77" r="2.700"/></g>
      <g class="x-ticks">
        <text transform="translate(64 91) rotate(-45)">Mar 02</text><text transform="translate(90 91) rotate(-45)">Mar 03</text><text transform="translate(115.900 91) rotate(-45)">Mar 04</text><text transform="translate(141.900 91) rotate(-45)">Mar 05</text><text transform="translate(167.900 91) rotate(-45)">Mar 06</text><text transform="translate(193.900 91) rotate(-45)">Mar 07</text><text transform="translate(219.800 91) rotate(-45)">Mar 08</text><text transform="translate(245.800 91) rotate(-45)">Mar 09</text><text transform="translate(271.800 91) rotate(-45)">Mar 10</text><text transform="translate(297.700 91) rotate(-45)">Mar 11</text><text transform="translate(323.700 91) rotate(-45)">Mar 12</text><text transform="translate(349.700 91) rotate(-45)">Mar 13</text><text transform="translate(375.600 91) rotate(-45)">Mar 14</text><text transform="translate(401.600 91) rotate(-45)">Mar 15</text><text transform="translate(427.600 91) rotate(-45)">Mar 16</text><text transform="translate(453.600 91) rotate(-45)">Mar 17</text><text transform="translate(479.500 91) rotate(-45)">Mar 18</text><text transform="translate(505.500 91) rotate(-45)">Mar 19</text><text transform="translate(531.500 91) rotate(-45)">Mar 20</text><text transform="translate(557.400 91) rotate(-45)">Mar 21</text><text transform="translate(583.400 91) rotate(-45)">Mar 22</text><text transform="translate(609.400 91) rotate(-45)">Mar 23</text><text transform="translate(635.300 91) rotate(-45)">Mar 24</text><text transform="translate(661.300 91) rotate(-45)">Mar 25</text><text transform="translate(687.300 91) rotate(-45)">Mar 26</text><text transform="translate(713.300 91) rotate(-45)">Mar 27</text><text transform="translate(739.200 91) rotate(-45)">Mar 28</text><text transform="translate(765.200 91) rotate(-45)">Mar 29</text><text transform="translate(791.100 91) rotate(-45)">Mar 30</text><text transform="translate(817.100 91) rotate(-45)">Mar 31</text><text transform="translate(843 91) rotate(-45)">Apr 01</text>
      </g>
      <rect class="lg-g" x="379.500" y="130" width="11.500" height="11"/><text class="lg-t" x="396" y="139">الدخل</text>
      <rect class="lg-r" x="427.500" y="130" width="11.500" height="11"/><text class="lg-t" x="444" y="139">المصروفات</text>
    </svg>
  </section>

  <section class="card table-card">
    <h4 class="card-title t-table">آخر الحجاج</h4>
    <table class="pilgrims">
      <thead><tr><th class="c1">الاسم واللقب</th><th class="c2">المجموعة</th><th class="c3">مسجل في</th><th class="c4">حالة التأشيرة</th></tr></thead>
      <tbody>
        <tr><td>Ismail Arslan</td><td>porodična umra</td><td>29.03.2026 21:47</td><td><span class="tag pending">معلق</span></td></tr>
        <tr><td>Mehmet Yavuz</td><td>porodična umra</td><td>29.03.2026 21:34</td><td><span class="tag ok">موافق عليها</span></td></tr>
        <tr><td>Ahmed Kadić</td><td>VIP Umra</td><td>21.03.2026 12:51</td><td><span class="tag pending">معلق</span></td></tr>
      </tbody>
    </table>
  </section>

  <section class="bottom">
    <article class="card todo">
      <div class="todo-head">
        <svg class="todo-icon" viewBox="0 0 24 24"><path d="M8 4h2V2h6v2h2v18H6V6" fill="#dff7ea" stroke="#10a36a" stroke-width="1.800"/><path d="M9.500 14l2 2.500 3.500-4.500" fill="none" stroke="#10a36a" stroke-width="1.800"/></svg>
        <h4>التذكير / المهام</h4>
        <span class="reset">إعادة تعيين</span>
      </div>
      <ul class="todo-list">
        <li><span class="radio"></span>إرسال قائمة التأشيرات</li>
        <li><span class="radio"></span>تأكيد حجز الفندق</li>
        <li><span class="radio"></span>إرسال قائمة الغرف</li>
      </ul>
      <div class="todo-add"><span class="ph">إضافة مهمة جديدة...</span><button class="add">+</button></div>
    </article>
    <article class="card donut-card">
      <h4 class="card-title t-donut">نظرة عامة على حالة التأشيرة</h4>
      <svg class="donut" viewBox="0 0 425 250">
        <path class="d-o" d="M213 22.500A113.500 113.500 0 1 1 114.700 192.750L162.800 165A58 58 0 1 0 213 78Z"/>
        <path class="d-g" d="M114.700 192.750A113.500 113.500 0 0 1 213 22.500L213 78A58 58 0 0 0 162.800 165Z"/>
      </svg>
      <div class="legend">
        <span class="lg">مرفوضة<i class="sw red"></i></span>
        <span class="lg">موافق عليها<i class="sw grn"></i></span>
        <span class="lg">معلق<i class="sw org"></i></span>
      </div>
    </article>
  </section>
</main>
</div>
</body>
</html>
```
FILE: styles.css
```css
* { box-sizing: border-box; }
html, body { margin: 0; padding: 0; }
body { background: #fafafa; font-family: Inter, "Noto Sans", sans-serif; color: #111; width: 1200px; height: 2059px; overflow: hidden; }
.defs { display: none; }
h1, h2, h3, h4, p, ul { margin: 0; padding: 0; }

.topbar { height: 56px; background: #fff; border-bottom: 1px solid #e5e7eb; display: flex; justify-content: space-between; align-items: center; padding: 0 14px; }
.brand { display: flex; align-items: center; }
.brand-toggle { width: 22px; height: 22px; fill: none; stroke: #6b7280; stroke-width: 1.3; stroke-linecap: round; margin-inline-start: 2px; margin-inline-end: 3px; }
.brand-word { display: flex; flex-direction: column; direction: ltr; text-align: left; width: 96px; margin-right: 16px; }
.brand-name { font-size: 22px; line-height: 20px; font-weight: 600; letter-spacing: 2.6px; color: #1f4d40; }
.brand-sub { font-size: 4.6px; line-height: 7px; margin-top: 2px; font-weight: 700; color: #555; white-space: nowrap; }
.brand-mark { width: 40px; height: 40px; margin-inline-start: 3px; }
.tools { display: flex; align-items: center; }
.search { width: 209px; height: 33px; background: #fff; border: 1px solid #d9dbde; border-radius: 7px; display: flex; align-items: center; gap: 7px; padding: 0 9px; font-size: 12px; color: #9ca3af; }
.search-icon { width: 18px; height: 18px; fill: none; stroke: #6b7280; stroke-width: 1.3; }
.lang { width: 31px; height: 31px; margin-inline-start: 13px; background: #e7f7ec; color: #1aa34a; border-radius: 6px; font-size: 13px; font-weight: 700; display: flex; align-items: center; justify-content: center; }
.bell { width: 20px; height: 20px; margin-inline-start: 14px; fill: none; stroke: #6b7280; stroke-width: 1.3; }
.avatar { width: 28px; height: 28px; margin-inline-start: 14px; background: #000; color: #fff; border-radius: 50%; font-size: 11px; display: flex; align-items: center; justify-content: center; }

.layout { display: flex; align-items: flex-start; }
.sidebar { width: 274.5px; flex: none; padding: 71px 14.5px 0 14px; }
.org { display: flex; align-items: center; height: 27px; padding: 0 6px; gap: 10px; }
.org-logo { width: 27px; height: 27px; background: #000; color: #fff; border-radius: 4px; font-size: 12px; display: flex; align-items: center; justify-content: center; }
.org-name { font-size: 12.3px; font-weight: 500; flex: 1; color: #222; }
.chev { width: 14px; height: 14px; fill: none; stroke: #9ca3af; stroke-width: 1.4; margin-inline-end: 1px; }
.nav-group { display: flex; flex-direction: column; gap: 4px; margin-top: 31px; }
.nav-group.first { margin-top: 35.5px; }
.nav-head { height: 20px; padding: 0 6px; margin-bottom: 7.15px; display: flex; align-items: center; justify-content: space-between; font-size: 12px; font-weight: 500; color: #6b7280; }
.nav-item { height: 33.7px; display: flex; align-items: center; gap: 10px; padding: 0 5.5px 0 6px; border-radius: 8px; font-size: 11.6px; font-weight: 600; color: #4b5563; }
.nav-item.active { background: #f4f4f5; color: #16a34a; }
.nav-icon { width: 22px; height: 22px; fill: none; stroke: #9ca3af; stroke-width: 1.1; flex: none; }
.active .nav-icon { stroke: #16a34a; }
.count { margin-inline-start: auto; width: 21px; height: 20px; background: #fef2f2; border: 1px solid #fecdd3; color: #b91c1c; border-radius: 5px; font-size: 11px; font-weight: 600; display: flex; align-items: center; justify-content: center; }

.main { flex: 1; min-width: 0; padding: 25px 27.3px 0; display: flex; flex-direction: column; gap: 20.3px; }
.page-head { display: flex; justify-content: space-between; align-items: center; height: 33px; margin-bottom: 5.7px; }
.page-head h1 { font-size: 25.2px; font-weight: 700; color: #0b0b0b; }
.config { height: 33px; width: 134px; padding: 0 9px; background: #fff; border: 1px solid #e5e7eb; border-radius: 6px; font: inherit; font-size: 11.5px; font-weight: 600; color: #111; display: flex; align-items: center; gap: 7px; }
.config-icon { width: 16px; height: 16px; fill: none; stroke: #9ca3af; stroke-width: 1.2; flex: none; }

.hero { height: 245px; border-radius: 14px; padding: 28px; color: #fff; box-shadow: 0 10px 24px rgba(0,0,0,.16);
  background:
    repeating-linear-gradient(90deg, transparent 0 86px, rgba(255,255,255,.05) 86px 87px),
    repeating-linear-gradient(0deg, transparent 0 86px, rgba(255,255,255,.03) 86px 87px),
    linear-gradient(168deg, #00b873 0%, #009e6f 55%, #00998a 100%); }
.hero-top { display: flex; justify-content: space-between; align-items: center; height: 106px; }
.hero-text { width: 384px; display: flex; flex-direction: column; }
.hero-badge { height: 20px; padding: 0 8px; background: rgba(255,255,255,.15); border-radius: 10px; display: inline-flex; align-items: center; gap: 6px; font-size: 10px; font-weight: 700; align-self: flex-end; }
.dot { width: 6px; height: 6px; background: #fff; border-radius: 50%; }
.hero-text h2 { font-size: 19px; font-weight: 700; line-height: 28px; margin-top: 8px; align-self: flex-end; }
.hero-text p { font-size: 13px; line-height: 20.5px; margin-top: 7px; color: #c8f3e2; text-align: left; padding-inline-start: 7px; }
.hero-btn { width: 151px; height: 38px; background: #00e06e; border: 0; border-radius: 5px; color: #0f5f3a; font: inherit; font-size: 11.5px; font-weight: 700; display: flex; align-items: center; justify-content: center; gap: 4px; }
.rocket { width: 16px; height: 16px; }
.hero-stats { margin-top: 21px; padding-top: 21px; border-top: 1px solid rgba(255,255,255,.16); display: grid; grid-template-columns: repeat(3, 1fr); gap: 16px; text-align: center; }
.hero-stat strong { display: block; font-size: 20px; line-height: 28px; font-weight: 700; }
.hero-stat span { display: block; font-size: 10.5px; line-height: 13px; color: #a7f0d3; }

.weather-grid { display: grid; grid-template-columns: 1fr 1fr; gap: 14.5px; }
.weather { height: 310.5px; border-radius: 12px; padding: 16px 18px; box-shadow: 0 1px 3px rgba(0,0,0,.06); }
.weather.green { background: linear-gradient(150deg, #ebfcf3, #d9f9e7); border: 1px solid #b5ecd1; color: #0a5a43; --w-strong: #064e3b; --w-soft: #1f9d75; --w-line: #0fa876; }
.weather.blue { background: linear-gradient(150deg, #eaf1fe, #dce7fd); border: 1px solid #c3d5f6; color: #1e3a8a; --w-strong: #1e3a8a; --w-soft: #3f6fd1; --w-line: #2f74df; }
.w-head { display: flex; align-items: center; height: 30px; }
.w-city { width: 24px; height: 24px; flex: none; }
.w-head h3 { font-size: 16px; font-weight: 600; margin-inline-start: 9px; color: #333; }
.w-date { margin-inline-start: auto; font-size: 10.5px; font-weight: 500; color: var(--w-soft); }
.w-main { display: flex; align-items: flex-start; margin-top: 13.5px; height: 67px; }
.w-sun { width: 29px; height: 29px; flex: none; margin: 14px 8.5px 0 19.5px; }
.sun-core { fill: #ffcb14; stroke: #f7a823; stroke-width: 1; }
.sun-rays { fill: none; stroke: #f9bf3b; stroke-width: 2.4; stroke-linecap: round; }
.w-temp { width: 66px; flex: none; display: flex; flex-direction: column; align-items: flex-start; white-space: nowrap; font-size: 10.5px; color: var(--w-soft); line-height: 14px; }
.w-temp strong { font-size: 27px; line-height: 28px; font-weight: 700; color: var(--w-strong); margin-bottom: 1px; }
.w-feels { font-size: 10px; }
.w-next { flex: 1; height: 67px; margin-inline-start: 15.5px; background: rgba(255,255,255,.72); border-radius: 8px; padding: 7px 11px 0; display: flex; justify-content: space-between; }
.w-next-a { display: flex; flex-direction: column; font-size: 10.5px; color: var(--w-soft); }
.w-next-a small { font-size: 10.5px; line-height: 13px; opacity: .85; }
.w-next-a b { font-size: 12.5px; line-height: 16px; margin-top: 6px; color: var(--w-strong); font-weight: 700; }
.w-next-a span { font-size: 11px; line-height: 14px; margin-top: 1px; opacity: .9; }
.w-next-b { display: flex; flex-direction: column; align-items: flex-end; padding-top: 15px; font-size: 10.5px; color: var(--w-soft); }
.w-next-b strong { font-size: 15.5px; line-height: 20px; font-weight: 700; color: var(--w-strong); direction: ltr; unicode-bidi: isolate; letter-spacing: -.2px; }
.blue .w-next-b strong { color: #2d54b0; }
.w-next-b i { font-style: normal; font-size: 10px; }
.w-next-b span { margin-top: 3px; align-self: center; line-height: 14px; }
.w-label { margin-top: 14px; font-size: 10.5px; line-height: 14px; color: var(--w-soft); }
.w-days { display: grid; grid-template-columns: repeat(3, 1fr); gap: 7px; margin-top: 7px; }
.w-day { height: 68.5px; background: rgba(255,255,255,.4); border-radius: 8px; display: flex; flex-direction: column; align-items: center; padding-top: 7px; font-size: 10.5px; color: var(--w-strong); }
.w-day span { line-height: 14px; opacity: .85; }
.w-sun-s { width: 17px; height: 17px; margin-top: 3px; }
.w-day em { font-style: normal; font-size: 10.5px; line-height: 14px; margin-top: 6px; color: var(--w-soft); }
.w-day em b { font-weight: 600; }
.w-prayers { display: grid; grid-template-columns: repeat(5, 1fr); gap: 5.5px; margin-top: 10.5px; }
.w-prayer { height: 51.5px; background: rgba(255,255,255,.45); border-radius: 6px; display: flex; flex-direction: column; align-items: center; justify-content: center; gap: 3px; font-size: 11.5px; font-weight: 600; color: var(--w-strong); }
.w-prayer span { line-height: 17px; }
.w-prayer b { font-weight: 600; font-size: 11.8px; line-height: 16px; opacity: .85; }
.w-prayer.now { height: 54.5px; border: 2px solid var(--w-line); border-radius: 7px; margin: -1.5px; background: rgba(255,255,255,.6); }

.stats { display: grid; gap: 20.4px; }
.stats.three { grid-template-columns: repeat(3, 1fr); }
.stats.four { grid-template-columns: repeat(4, 1fr); }
.stat { position: relative; overflow: hidden; background: #fff; border: 1px solid #f1f1f1; border-radius: 11px; padding: 20px 19.5px 0; box-shadow: 0 1px 3px rgba(0,0,0,.1); }
.h120 { height: 120px; }
.h151 { height: 151px; }
.s-label { font-size: 11.5px; line-height: 18px; font-weight: 500; color: #6b7280; }
.s-value { font-size: 25.2px; line-height: 31px; font-weight: 600; margin-top: 6px; color: #0c0c0c; letter-spacing: -.4px; white-space: nowrap; }
.s-value.wrap { white-space: normal; width: 120px; }
.s-sub { display: flex; align-items: center; gap: 6px; margin-top: 7px; font-size: 11.4px; line-height: 18px; position: relative; z-index: 1; }
.s-icon { width: 17px; height: 17px; flex: none; }
.s-icon.line { fill: none; stroke: currentColor; stroke-width: 1.8; }
.solid-g { fill: #0fbf4f; }
.c-green { color: #21935f; }
.c-green .s-icon.line { color: #1fae5f; }
.c-red { color: #dc2f3c; }
.c-amber { color: #b8672a; }
.c-blue { color: #3b6fe0; }
.spark { position: absolute; inset: auto 0 0 0; width: 100%; height: 40px; }
.area-g { fill: rgba(34,197,94,.08); }
.ln-g { fill: none; stroke: #22b85a; stroke-width: 1.8; }
.area-r { fill: rgba(239,68,68,.09); }
.ln-r { fill: none; stroke: #ef4050; stroke-width: 1.8; }

.card { background: #fff; border: 1px solid #f0f0f0; border-radius: 11px; box-shadow: 0 1px 3px rgba(0,0,0,.1); overflow: hidden; }
.card-title { height: 48px; padding: 0 19.5px; display: flex; align-items: center; font-size: 12.7px; font-weight: 600; color: #111; border-bottom: 1px solid #ebebeb; }
.t-chart { font-size: 13.3px; }
.t-table { font-size: 12.5px; height: 46.5px; }
.chart-card { height: 219.5px; }
.fin-chart { display: block; width: 871px; height: 170px; margin: 0 -1px; direction: ltr; }
.grid path { stroke: #ececec; fill: none; stroke-width: 1; }
.y-ticks text { font-size: 11px; fill: #9ca3af; text-anchor: end; }
.x-ticks text { font-size: 10.5px; fill: #a0a4ab; text-anchor: end; }
.fin-area-g { fill: rgba(16,185,129,.13); }
.fin-area-r { fill: rgba(239,68,68,.15); }
.fin-line-g { fill: none; stroke: #1fb886; stroke-width: 2.4; }
.fin-line-r { fill: none; stroke: #e0474c; stroke-width: 2; }
.dots-g circle { fill: #1fb886; }
.dots-r circle { fill: #e0474c; }
.lg-g { fill: rgba(16,185,129,.15); stroke: #1fb886; stroke-width: 1.8; }
.lg-r { fill: rgba(239,68,68,.15); stroke: #e0474c; stroke-width: 1.8; }
.lg-t { font-size: 10px; fill: #8f8f8f; }

.table-card { height: 236px; }
.pilgrims { width: 100%; border-collapse: collapse; table-layout: fixed; font-size: 12.3px; }
.pilgrims th { height: 42px; text-align: right; padding: 0 19.5px; font-weight: 600; font-size: 11.5px; background: #fafafa; border-bottom: 1px solid #e8e8e8; color: #222; }
.pilgrims td { height: 48.8px; padding: 0 19.5px; color: #374151; border-bottom: 1px solid #ebebeb; }
.pilgrims tr:last-child td { border-bottom: 0; }
.c1 { width: 218.5px; }
.c2 { width: 218.5px; }
.c3 { width: 239.5px; }
.tag { display: inline-flex; align-items: center; height: 18px; padding: 0 5px; border-radius: 5px; font-size: 10px; font-weight: 600; border: 1px solid; }
.tag.pending { background: #fff8eb; border-color: #fdeccb; color: #b4632a; }
.tag.ok { background: #ebfbf1; border-color: #d3f5df; color: #15803d; }

.bottom { display: grid; grid-template-columns: 425px 425.5px; gap: 20.5px; align-items: start; }
.todo { height: 246px; padding: 16px 20px; }
.todo-head { display: flex; align-items: center; height: 28px; }
.todo-icon { width: 16px; height: 18px; flex: none; }
.todo-head h4 { font-size: 14.5px; font-weight: 600; margin-inline-start: 8px; }
.reset { margin-inline-start: auto; font-size: 10.5px; color: #b5b5b5; }
.todo-list { list-style: none; margin-top: 9px; padding-inline-start: 6.5px; }
.todo-list li { display: flex; align-items: center; gap: 11px; height: 41.2px; font-size: 11.4px; font-weight: 500; color: #333; }
.radio { width: 20px; height: 20px; flex: none; border-radius: 50%; border: 1.5px solid #d9d9d9; background: #fff; }
.todo-add { margin-top: 9px; border-top: 1px solid #444; padding-top: 11px; display: flex; justify-content: space-between; align-items: center; }
.ph { font-size: 11.5px; color: #9ca3af; }
.add { width: 37px; height: 24px; background: #0a9a68; color: #fff; border: 0; border-radius: 6px; font: inherit; font-size: 17px; line-height: 1; }
.donut-card { height: 347.5px; }
.donut { display: block; width: 425px; height: 250px; margin: 0 -1px; }
.d-o { fill: #f59e26; stroke: #fff; stroke-width: 1; }
.d-g { fill: #17b982; stroke: #fff; stroke-width: 1; }
.legend { display: flex; justify-content: center; gap: 10px; margin-top: 6px; font-size: 9.5px; color: #8f8f8f; }
.lg { display: flex; align-items: center; gap: 6px; }
.sw { width: 9px; height: 9px; display: block; }
.sw.red { background: #ef4444; }
.sw.grn { background: #17b982; }
.sw.org { background: #f59e26; }
```
